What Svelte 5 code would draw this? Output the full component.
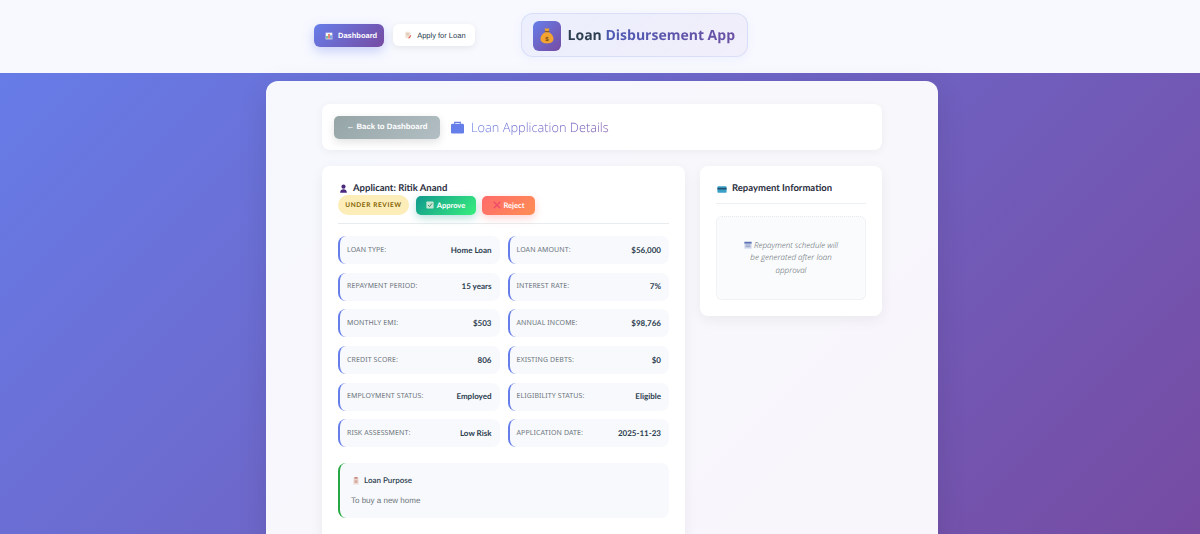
<script>
  const details = [
    ['Loan Type:', 'Home Loan'],
    ['Loan Amount:', '$56,000'],
    ['Repayment Period:', '15 years'],
    ['Interest Rate:', '7%'],
    ['Monthly EMI:', '$503'],
    ['Annual Income:', '$98,766'],
    ['Credit Score:', '806'],
    ['Existing Debts:', '$0'],
    ['Employment Status:', 'Employed'],
    ['Eligibility Status:', 'Eligible'],
    ['Risk Assessment:', 'Low Risk'],
    ['Application Date:', '2025-11-23']
  ];
</script>

<div class="page">
  <header class="topbar">
    <nav class="nav">
      <button class="nav-btn active">
        <svg class="ico" viewBox="0 0 12 12"><rect x="1" y="1" width="10" height="10" fill="#f4f4f4"/><rect x="2" y="6" width="2" height="4" fill="#3aa76d"/><rect x="5" y="3" width="2" height="7" fill="#e0503f"/><rect x="8" y="5" width="2" height="5" fill="#3b7dd8"/></svg>
        Dashboard
      </button>
      <button class="nav-btn">
        <svg class="ico" viewBox="0 0 12 12"><path d="M2 1h6l2 2v8H2z" fill="#f3e6d8"/><path d="M3 4h5M3 6h5" stroke="#c9a9a0" stroke-width=".8"/><path d="M6 11l4-5 1 1-3 4z" fill="#e2574c"/></svg>
        Apply for Loan
      </button>
    </nav>
    <div class="brand">
      <span class="brand-icon">
        <svg viewBox="0 0 14 16" width="14" height="16"><path d="M4.500 .5h5l-1 3h-3z" fill="#e8a530"/><rect x="4.800" y="3" width="4.400" height="1.200" fill="#8a5a1e"/><path d="M5 4.200C2.500 5.800 .5 8 .5 10.800c0 3 2.500 4.700 6.500 4.700s6.500-1.700 6.500-4.700C13.500 8 11.500 5.800 9 4.200z" fill="#f2a331"/><text x="7" y="12.500" text-anchor="middle" class="dollar">$</text></svg>
      </span>
      <span class="brand-text">Loan Disbursement App</span>
    </div>
  </header>

  <main class="panel">
    <div class="inner">
      <div class="title-bar">
        <button class="back">← Back to Dashboard</button>
        <h1>
          <svg class="case" viewBox="0 0 16 14" width="15" height="13"><path d="M5 3V1.500h6V3" fill="none" stroke="#667eea" stroke-width="1.400"/><rect x="1" y="3" width="14" height="10.500" rx="1.500" fill="#667eea"/></svg>
          <span>Loan Application Details</span>
        </h1>
      </div>

      <div class="columns">
        <section class="card">
          <h2>
            <svg class="h-ico" viewBox="0 0 12 12"><circle cx="6" cy="3.500" r="2.800" fill="#4b2a7d"/><path d="M1.500 11.500c0-3 2-4.500 4.500-4.500s4.500 1.500 4.500 4.500z" fill="#4b2a7d"/></svg>
            Applicant: Ritik Anand
          </h2>
          <div class="actions">
            <span class="status">UNDER REVIEW</span>
            <button class="act approve">
              <svg class="ico" viewBox="0 0 10 10"><rect x=".5" y=".5" width="9" height="9" rx="1" fill="#c9e6d5"/><path d="M2.500 5l2 2 3-4" fill="none" stroke="#3d8a63" stroke-width="1.200"/></svg>
              Approve
            </button>
            <button class="act reject">
              <svg class="ico" viewBox="0 0 10 10"><path d="M1 1l8 8M9 1l-8 8" stroke="#ef4d6b" stroke-width="2"/></svg>
              Reject
            </button>
          </div>

          <div class="grid">
            {#each details as [label, value]}
              <div class="row">
                <span class="label">{label}</span>
                <span class="value">{value}</span>
              </div>
            {/each}
          </div>

          <div class="purpose">
            <h3>
              <svg class="ico" viewBox="0 0 10 10"><rect x="1.500" y="1" width="7" height="8.500" fill="#efe3dc"/><rect x="3" y=".3" width="4" height="1.600" fill="#b9655a"/><path d="M3 4h4M3 5.500h4M3 7h4" stroke="#b9655a" stroke-width=".6"/></svg>
              Loan Purpose
            </h3>
            <p>To buy a new home</p>
          </div>
        </section>

        <aside class="card side">
          <h2 class="side-title">
            <svg class="h-ico card-ico" viewBox="0 0 12 10"><rect x=".5" y="1" width="11" height="8" rx="1" fill="#3aa0c8"/><rect x=".5" y="3" width="11" height="2" fill="#23506e"/></svg>
            Repayment Information
          </h2>
          <div class="empty">
            <p>
              <svg class="ico" viewBox="0 0 10 10"><rect x=".5" y="1" width="9" height="8.500" fill="#cfd6ea"/><rect x=".5" y="1" width="9" height="2.200" fill="#5a73b8"/><path d="M2 5h6M2 7h6" stroke="#7a8bb8" stroke-width=".8"/></svg>
              Repayment schedule will be generated after loan approval
            </p>
          </div>
        </aside>
      </div>
    </div>
  </main>
</div>

<style>
  :global(body) {
    margin: 0;
    font-family: "Open Sans", "Noto Sans", sans-serif;
    text-rendering: geometricPrecision;
  }

  .page {
    height: 534px;
    overflow: hidden;
    display: flex;
    flex-direction: column;
    background: linear-gradient(135deg, #667eea 0%, #764ba2 100%);
  }

  .topbar {
    flex: none;
    height: 73px;
    box-sizing: border-box;
    display: flex;
    align-items: center;
    padding-left: 314px;
    padding-bottom: 2px;
    background: #f8f9ff;
  }

  .nav {
    display: flex;
    gap: 9px;
    margin-right: 46px;
    align-items: flex-start;
  }

  .nav-btn {
    display: flex;
    align-items: center;
    gap: 5px;
    height: 22px;
    padding: 0 9px 0 11px;
    border: 0;
    border-radius: 6px;
    background: #fff;
    color: #2c3e50;
    font: 500 7.500px "Liberation Sans", Arial, sans-serif;
    text-rendering: geometricPrecision;
    box-shadow: 0 2px 7px rgba(0, 0, 0, 0.08);
  }

  .nav-btn.active {
    height: 23px;
    padding: 0 7px 0 11px;
    background: linear-gradient(135deg, #667eea, #764ba2);
    color: #fff;
    font-weight: 700;
    box-shadow: 0 4px 12px rgba(102, 126, 234, 0.35);
  }

  .ico {
    width: 8px;
    height: 8px;
    flex: none;
  }

  .brand {
    display: flex;
    flex: none;
    align-items: center;
    gap: 7px;
    width: 227px;
    height: 44px;
    box-sizing: border-box;
    margin-bottom: 2px;
    padding: 2px 0 0 11px;
    border: 1px solid rgba(102, 126, 234, 0.15);
    border-radius: 12px;
    background: linear-gradient(135deg, rgba(102, 126, 234, 0.08), rgba(118, 75, 162, 0.06));
    box-shadow: 0 2px 8px rgba(102, 126, 234, 0.08);
  }

  .brand-icon {
    flex: none;
    width: 28px;
    height: 30px;
    display: flex;
    align-items: center;
    justify-content: center;
    border-radius: 6px;
    background: linear-gradient(135deg, #667eea, #764ba2);
  }

  .dollar {
    font: 700 6px "Liberation Sans", sans-serif;
    fill: #7a4a12;
  }

  .brand-text {
    font-size: 14px;
    font-weight: 700;
    white-space: nowrap;
    background: linear-gradient(90deg, #2c3e50 19%, #4d5bb2 24%, #6a4fa4 100%);
    -webkit-background-clip: text;
    background-clip: text;
    color: transparent;
  }

  .panel {
    flex: 1;
    margin: 8px 262px 0 266px;
    padding: 23px 56px 0;
    border-radius: 12px 12px 0 0;
    background: rgba(255, 255, 255, 0.95);
    box-shadow: 0 8px 30px rgba(0, 0, 0, 0.1);
  }

  .title-bar {
    display: flex;
    align-items: center;
    gap: 10px;
    height: 46px;
    padding: 0 12px;
    box-sizing: border-box;
    border-radius: 8px;
    background: #fff;
    box-shadow: 0 2px 10px rgba(0, 0, 0, 0.05);
  }

  .back {
    width: 106px;
    height: 23px;
    padding: 0 0 1px;
    border: 0;
    border-radius: 5px;
    color: #fff;
    font: 700 7.800px "Liberation Sans", Arial, sans-serif;
    text-rendering: geometricPrecision;
    background: linear-gradient(135deg, #95a5a6, #b2bec3);
    box-shadow: 0 3px 8px rgba(0, 0, 0, 0.12);
  }

  h1 {
    display: flex;
    align-items: center;
    gap: 6px;
    margin: 0;
    font-size: 12.800px;
    font-weight: 300;
    white-space: nowrap;
  }

  h1 span {
    background: linear-gradient(135deg, #667eea, #764ba2);
    -webkit-background-clip: text;
    background-clip: text;
    color: transparent;
  }

  .columns {
    display: flex;
    align-items: flex-start;
    gap: 15px;
    margin-top: 16px;
  }

  .card {
    width: 363px;
    box-sizing: border-box;
    padding: 16px;
    border-radius: 8px;
    background: #fff;
    box-shadow: 0 4px 14px rgba(0, 0, 0, 0.06);
  }

  .card:not(.side) {
    padding-bottom: 32px;
  }

  .side {
    width: 182px;
  }

  h2 {
    display: flex;
    align-items: center;
    gap: 5px;
    margin: 0;
    padding-left: 1px;
    font-family: Lato, sans-serif;
    font-size: 9.500px;
    font-weight: 700;
    line-height: 13px;
    color: #2a2d3e;
  }

  .h-ico {
    width: 9px;
    height: 9px;
  }

  .side-title {
    padding: 0 0 8px 1px;
    border-bottom: 1px solid #eceff4;
  }

  .card-ico {
    width: 10px;
    margin-top: 2px;
  }

  .actions {
    display: flex;
    align-items: center;
    gap: 6.500px;
    padding-bottom: 8px;
    border-bottom: 1px solid #e9ecef;
  }

  .status {
    display: flex;
    align-items: center;
    justify-content: center;
    width: 71px;
    height: 20px;
    border-radius: 10px;
    background: #fcedb9;
    color: #856404;
    font-family: Lato, sans-serif;
    font-size: 6.500px;
    font-weight: 700;
    letter-spacing: 0.6px;
  }

  .act {
    display: flex;
    align-items: center;
    justify-content: center;
    gap: 3px;
    height: 19px;
    padding: 0;
    border: 0;
    border-radius: 5px;
    color: #fff;
    font-family: Lato, sans-serif;
    font-size: 7.500px;
    font-weight: 700;
    text-rendering: geometricPrecision;
  }

  .approve {
    width: 60px;
    background: linear-gradient(135deg, #11998e, #38ef7d);
    box-shadow: 0 3px 8px rgba(17, 153, 142, 0.3);
  }

  .reject {
    width: 53px;
    background: linear-gradient(135deg, #ff6b6b, #ff8e53);
    box-shadow: 0 3px 8px rgba(255, 107, 107, 0.3);
  }

  .grid {
    display: grid;
    grid-template-columns: 1fr 1fr;
    gap: 8.700px 8px;
    margin-top: 12px;
  }

  .row {
    display: flex;
    align-items: center;
    justify-content: space-between;
    height: 28px;
    box-sizing: border-box;
    padding: 0 8px 0 7px;
    border-left: 2px solid #667eea;
    border-radius: 8px;
    background: #f8f9fc;
  }

  .label {
    font-family: "Noto Sans", sans-serif;
    font-size: 7px;
    color: #6c757d;
    text-transform: uppercase;
    letter-spacing: 0.1px;
  }

  .value {
    margin-top: -1px;
    font-family: Lato, sans-serif;
    font-size: 8px;
    font-weight: 700;
    color: #2c3e50;
  }

  .purpose {
    height: 55px;
    box-sizing: border-box;
    margin-top: 16px;
    padding: 12px 11px;
    border-left: 2px solid #28a745;
    border-radius: 8px;
    background: #f8f9fc;
  }

  h3 {
    display: flex;
    align-items: center;
    gap: 4px;
    margin: 0 0 9px 1px;
    font-family: Lato, sans-serif;
    font-size: 8px;
    font-weight: 600;
    line-height: 11px;
    color: #2c3e50;
  }

  .purpose p {
    margin: 0;
    font-family: "Liberation Sans", sans-serif;
    font-size: 8px;
    line-height: 11px;
    color: #6c757d;
  }

  .empty {
    display: flex;
    align-items: center;
    justify-content: center;
    height: 84px;
    margin-top: 12px;
    box-sizing: border-box;
    padding: 1px 26px 0;
    border: 1px dotted #e6e9ed;
    border-radius: 6px;
    background: #fafbfc;
  }

  .empty p {
    margin: 0;
    font-size: 8px;
    font-style: italic;
    font-weight: 300;
    line-height: 12.500px;
    text-align: center;
    color: #4f5963;
  }

  .empty .ico {
    vertical-align: -1px;
  }
</style>
